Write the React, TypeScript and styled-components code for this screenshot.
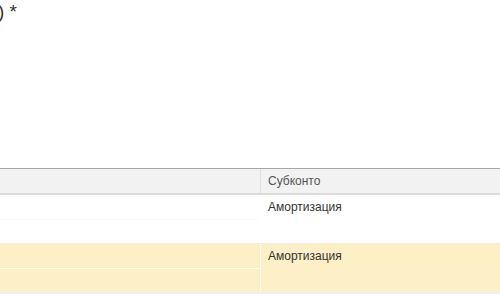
import React from "react";
import styled, { createGlobalStyle } from "styled-components";

const Global = createGlobalStyle`
  html, body { margin: 0; padding: 0; background: #fff; }
  body { font-family: "Liberation Sans", Arial, sans-serif; }
`;

const Page = styled.div`
  width: 500px;
  height: 300px;
  overflow: hidden;
  display: flex;
  flex-direction: column;
`;

const Title = styled.div`
  height: 168px;
  font-size: 19px;
  line-height: 24px;
  color: #333;
  margin-left: -2px;
  white-space: pre;
`;

const Table = styled.div`
  display: grid;
  grid-template-columns: 260px 1fr;
  border-top: 1px solid #a8a8a8;
`;

const HeadCell = styled.div<{ $divider?: boolean }>`
  height: 24px;
  background: #f2f2f2;
  border-bottom: 2px solid #dcdcdc;
  border-left: ${(p) => (p.$divider ? "1px solid #e0e0e0" : "none")};
  padding-left: 7px;
  font-size: 12px;
  line-height: 24px;
  color: #555;
`;

const Row = styled.div<{ $selected?: boolean }>`
  grid-column: 1 / -1;
  display: grid;
  grid-template-columns: 260px 1fr;
  height: 48px;
  background: ${(p) => (p.$selected ? "#fdf0c6" : "#fff")};
  border-top: ${(p) => (p.$selected ? "1px solid #ebebf0" : "none")};
  border-bottom: ${(p) => (p.$selected ? "2px solid #f0f0f3" : "none")};
`;

const LeftCol = styled.div`
  display: flex;
  flex-direction: column;
`;

const SubCell = styled.div<{ $selected?: boolean }>`
  flex: 1;
  & + & {
    border-top: 1px solid ${(p) => (p.$selected ? "#fffaf0" : "transparent")};
  }
`;

const Cell = styled.div<{ $selected?: boolean }>`
  border-left: 1px solid ${(p) => (p.$selected ? "#fffaf0" : "transparent")};
  padding: 5px 0 0 7px;
  font-size: 12px;
  line-height: 15px;
  color: #333;
`;

export default function App() {
  return (
    <Page>
      <Global />
      <Title>{") *"}</Title>
      <Table>
        <HeadCell />
        <HeadCell $divider>Субконто</HeadCell>
        <Row>
          <LeftCol>
            <SubCell />
            <SubCell />
          </LeftCol>
          <Cell>Амортизация</Cell>
        </Row>
        <Row $selected>
          <LeftCol>
            <SubCell $selected />
            <SubCell $selected />
          </LeftCol>
          <Cell $selected>Амортизация</Cell>
        </Row>
      </Table>
    </Page>
  );
}
